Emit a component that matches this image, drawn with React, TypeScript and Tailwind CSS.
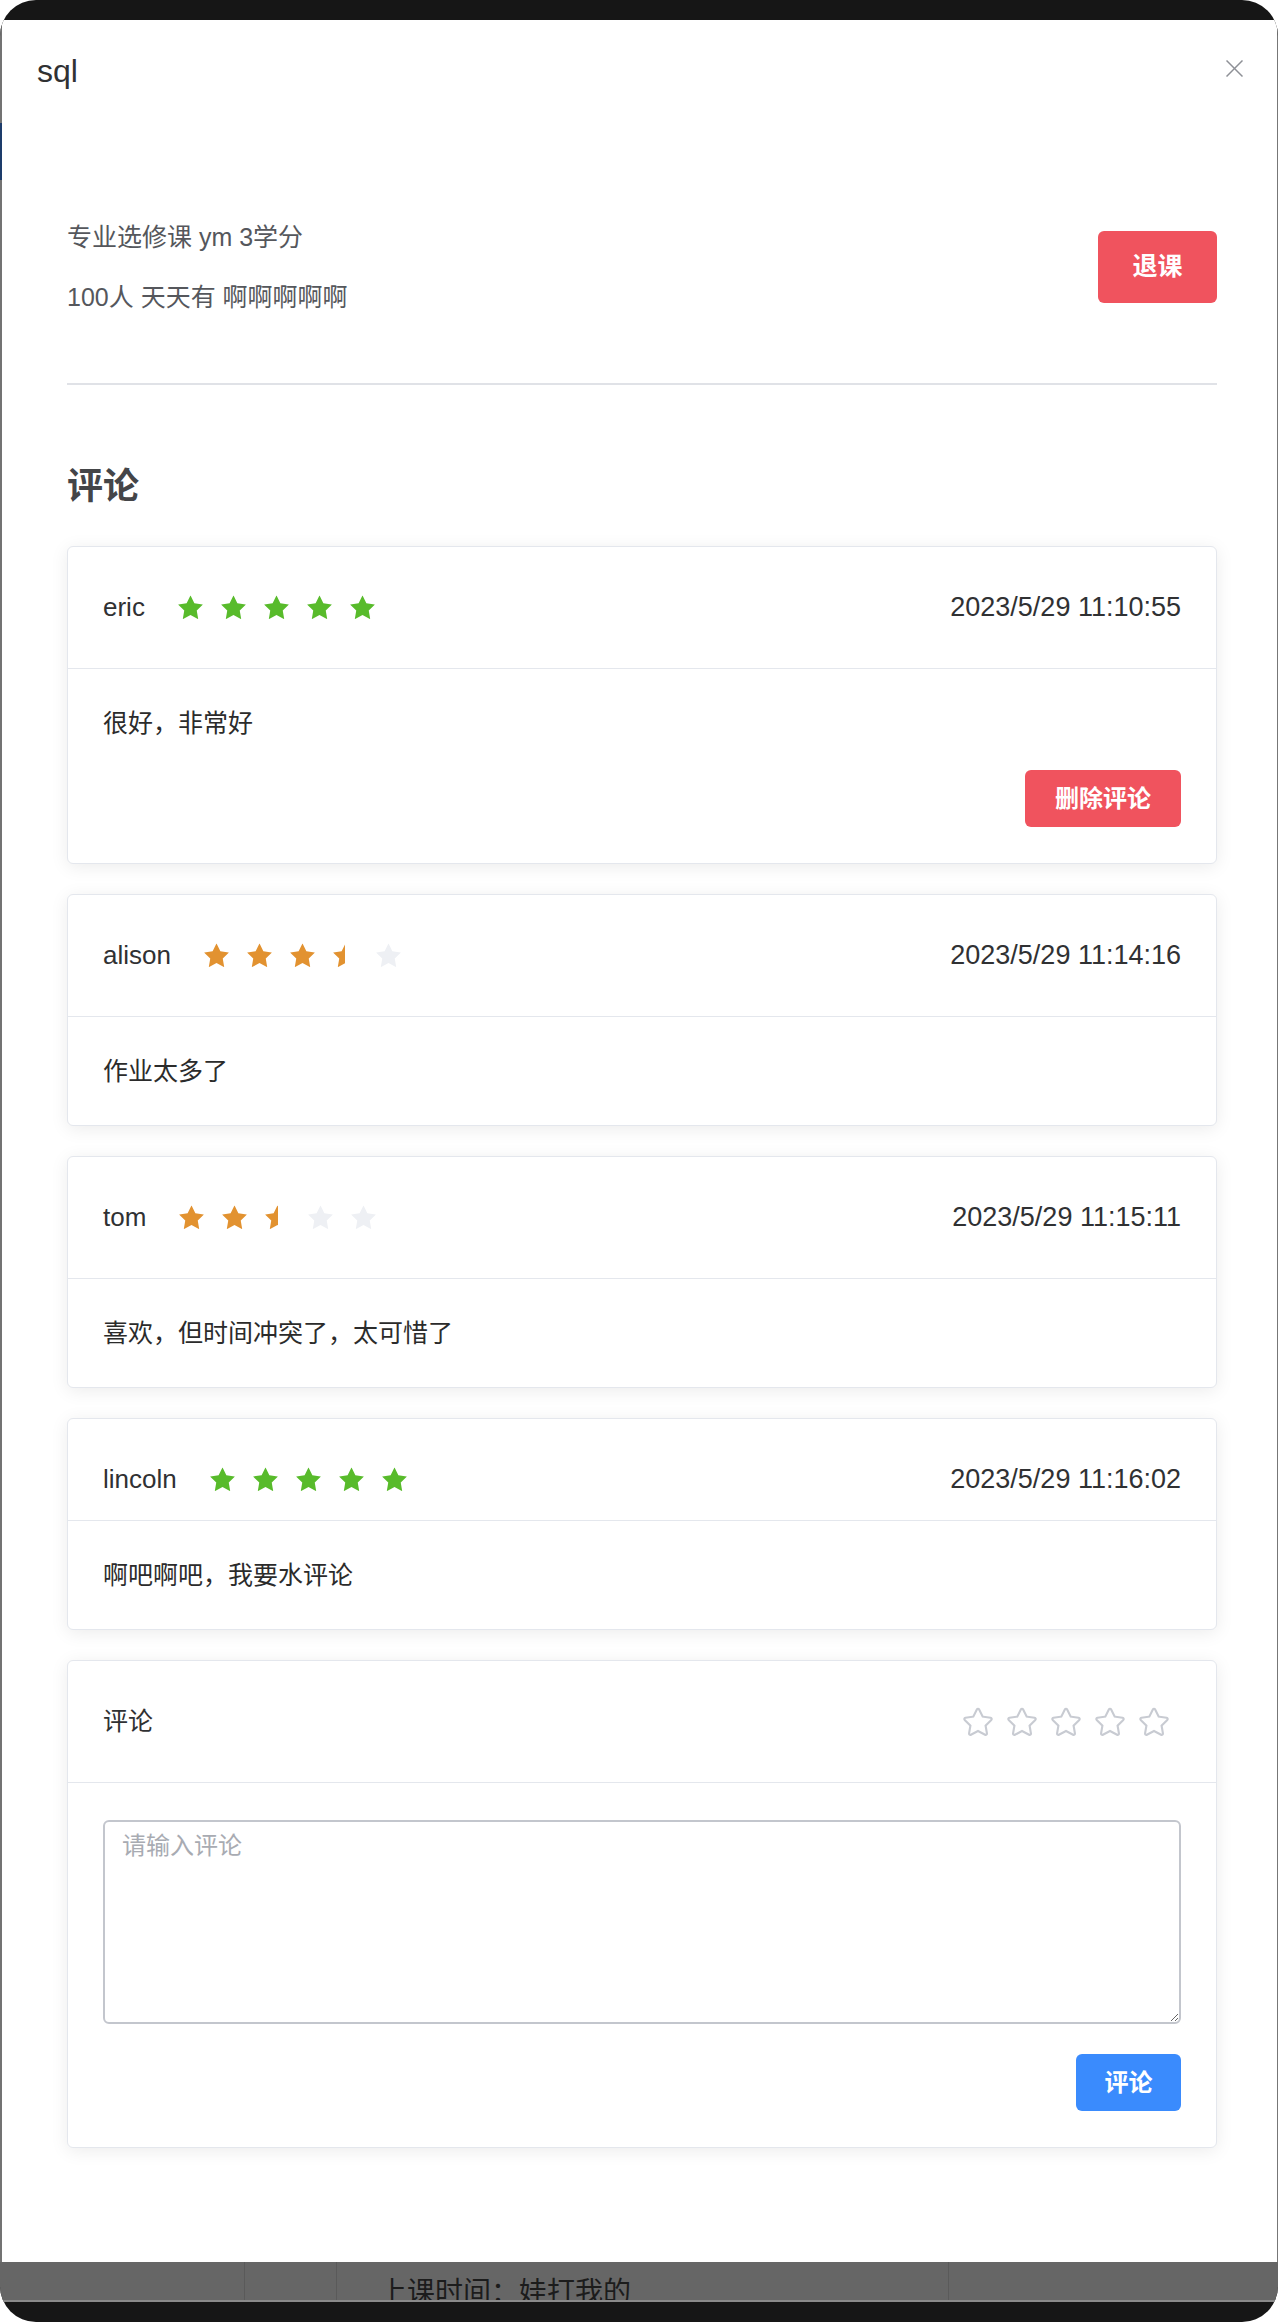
import React from 'react';

// Course detail dialog with the comment list

const FONT = "font-['Liberation_Sans','Noto_Sans_CJK_SC',sans-serif]";

const STAR_FILLED =
  'M283.84 867.84 512 747.776l228.16 119.936a6.4 6.4 0 0 0 9.28-6.72l-43.52-254.08 184.512-179.904a6.4 6.4 0 0 0-3.52-10.88l-255.104-37.12L517.76 147.904a6.4 6.4 0 0 0-11.52 0L392.192 379.072l-255.104 37.12a6.4 6.4 0 0 0-3.52 10.88L318.08 606.976l-43.584 254.08a6.4 6.4 0 0 0 9.28 6.72z';

const STAR_OUTLINE =
  'M512 747.84l228.16 119.936a6.4 6.4 0 0 0 9.28-6.72l-43.52-254.08 184.512-179.904a6.4 6.4 0 0 0-3.52-10.88l-255.104-37.12L517.76 147.904a6.4 6.4 0 0 0-11.52 0L392.192 379.136l-255.104 37.12a6.4 6.4 0 0 0-3.52 10.88L318.08 606.976l-43.584 254.08a6.4 6.4 0 0 0 9.28 6.72L512 747.84zM313.6 924.48a70.4 70.4 0 0 1-102.144-74.24l37.888-220.928L88.96 472.96A70.4 70.4 0 0 1 128 352.896l221.76-32.256 99.2-200.96a70.4 70.4 0 0 1 126.208 0l99.2 200.96 221.824 32.256a70.4 70.4 0 0 1 39.04 120.064L774.72 629.376l37.888 220.928a70.4 70.4 0 0 1-102.144 74.24L512 820.096l-198.4 104.32z';

type Comment = {
  user: string;
  rate: number;
  time: string;
  text: string;
  own?: boolean;
  short?: boolean;
};

const comments: Comment[] = [
  { user: 'eric', rate: 5, time: '2023/5/29 11:10:55', text: '很好，非常好', own: true },
  { user: 'alison', rate: 3.5, time: '2023/5/29 11:14:16', text: '作业太多了' },
  { user: 'tom', rate: 2.5, time: '2023/5/29 11:15:11', text: '喜欢，但时间冲突了，太可惜了' },
  { user: 'lincoln', rate: 5, time: '2023/5/29 11:16:02', text: '啊吧啊吧，我要水评论', short: true },
];

function Star({ fill }: { fill: string }) {
  return (
    <svg viewBox="0 0 1024 1024" className="w-[33px] h-[33px] block" fill={fill}>
      <path d={STAR_FILLED} />
    </svg>
  );
}

function Rating({ value }: { value: number }) {
  // full score shows green, lower scores orange
  const color = value >= 5 ? '#58bb2b' : '#e29230';
  return (
    <div className="flex items-center ml-[29px]">
      {[1, 2, 3, 4, 5].map((i) => (
        <div key={i} className="mr-[10px] w-[33px] h-[33px]">
          {i <= value ? (
            <Star fill={color} />
          ) : i - 0.5 <= value ? (
            <div className="w-[16.5px] h-[33px] overflow-hidden">
              <Star fill={color} />
            </div>
          ) : (
            <Star fill="#eef0f4" />
          )}
        </div>
      ))}
    </div>
  );
}

function CommentCard({ c }: { c: Comment }) {
  return (
    <div className="bg-white border border-[#e4e7ed] rounded-[6px] shadow-[0_3px_18px_rgba(0,0,0,0.08)]">
      <div
        className={
          c.short
            ? 'h-[102px] pt-[20px] px-[35px] flex items-center border-b border-[#e4e7ed]'
            : 'h-[122px] px-[35px] flex items-center border-b border-[#e4e7ed]'
        }
      >
        <span className="text-[26px] text-[#303133]">{c.user}</span>
        <Rating value={c.rate} />
        <span className="ml-auto text-[27px] text-[#303133]">{c.time}</span>
      </div>
      <div className="px-[35px] py-[36px]">
        <p className="text-[25px] leading-[36px] text-[#2b2b2b]">{c.text}</p>
        {c.own && (
          <div className="flex justify-end mt-[29px]">
            <button className="h-[57px] w-[156px] rounded-[6px] bg-[#f0535e] text-white text-[24px] font-bold">
              删除评论
            </button>
          </div>
        )}
      </div>
    </div>
  );
}

function NewComment() {
  return (
    <div className="bg-white border border-[#e4e7ed] rounded-[6px] shadow-[0_3px_18px_rgba(0,0,0,0.08)]">
      <div className="h-[122px] px-[35px] flex items-center justify-between border-b border-[#e4e7ed]">
        <span className="text-[25px] text-[#303133]">评论</span>
        <div className="flex items-center">
          {[1, 2, 3, 4, 5].map((i) => (
            <svg key={i} viewBox="0 0 1024 1024" className="w-[34px] h-[34px] mr-[10px]" fill="#c8cbd2">
              <path d={STAR_OUTLINE} />
            </svg>
          ))}
        </div>
      </div>
      <div className="px-[35px] pt-[37px] pb-[36px]">
        <textarea
          placeholder="请输入评论"
          className={`${FONT} block w-full h-[204px] border-2 border-[#c3c6cd] rounded-[6px] pt-[6px] pl-[17px] text-[24px] leading-[36px] placeholder:text-[#a8abb2] outline-none`}
        />
        <div className="flex justify-end mt-[30px]">
          <button className="h-[57px] w-[105px] rounded-[6px] bg-[#3a8bfd] text-white text-[24px] font-bold">
            评论
          </button>
        </div>
      </div>
    </div>
  );
}

export default function App() {
  return (
    <div className={`${FONT} w-[1278px] h-[2322px] bg-white`}>
      <div className="h-full rounded-[36px] overflow-hidden bg-[#161616] flex flex-col">
        {/* top bezel */}
        <div className="h-[20px] shrink-0" />

        {/* screen */}
        <div className="flex h-[2242px] shrink-0">
          <div className="w-[2px] bg-[#737373]">
            <div className="mt-[103px] h-[57px] bg-[#1d3c6b]" />
          </div>

          {/* dialog */}
          <div className="flex-1 bg-white">
            <div className="pt-[32px] pl-[35px] pr-[34px] flex justify-between items-start">
              <h1 className="text-[32px] leading-[38px] text-[#303133]">sql</h1>
              <svg viewBox="0 0 17 17" className="mt-[8px] w-[17px] h-[17px]" stroke="#8e9096" strokeWidth={1.5}>
                <line x1="0.5" y1="0.5" x2="16.5" y2="16.5" />
                <line x1="16.5" y1="0.5" x2="0.5" y2="16.5" />
              </svg>
            </div>

            <div className="pl-[65px] pr-[60px]">
              <div className="mt-[129px] flex items-center justify-between">
                <div className="text-[25px] leading-[36px] text-[#55575c]">
                  <p>专业选修课 ym 3学分</p>
                  <p className="mt-[24px]">100人 天天有 啊啊啊啊啊</p>
                </div>
                <button className="h-[72px] w-[119px] rounded-[6px] bg-[#f0535e] text-white text-[25px] font-bold">
                  退课
                </button>
              </div>

              <div className="mt-[68px] h-[2px] bg-[#e0e2e7]" />

              <h2 className="mt-[80px] text-[36px] leading-[44px] font-bold text-[#444548]">评论</h2>

              <div className="mt-[37px] flex flex-col gap-[30px]">
                {comments.map((c) => (
                  <CommentCard key={c.user} c={c} />
                ))}
                <NewComment />
              </div>
            </div>
          </div>

          <div className="w-[1px] bg-[#777777]" />
        </div>

        {/* page behind the overlay */}
        <div className="h-[38px] shrink-0 bg-[#666666] flex overflow-hidden">
          <div className="w-[245px] border-r border-[#5a5a5a]" />
          <div className="w-[92px] border-r border-[#5a5a5a]" />
          <div className="w-[612px] border-r border-[#5a5a5a] pl-[42px] pt-[15px]">
            <span className="text-[28px] leading-[32px] text-[#1c1c1c] whitespace-nowrap">上课时间：娃打我的</span>
          </div>
        </div>
        <div className="h-[2px] shrink-0 bg-[#8a8a8a]" />
      </div>
    </div>
  );
}
